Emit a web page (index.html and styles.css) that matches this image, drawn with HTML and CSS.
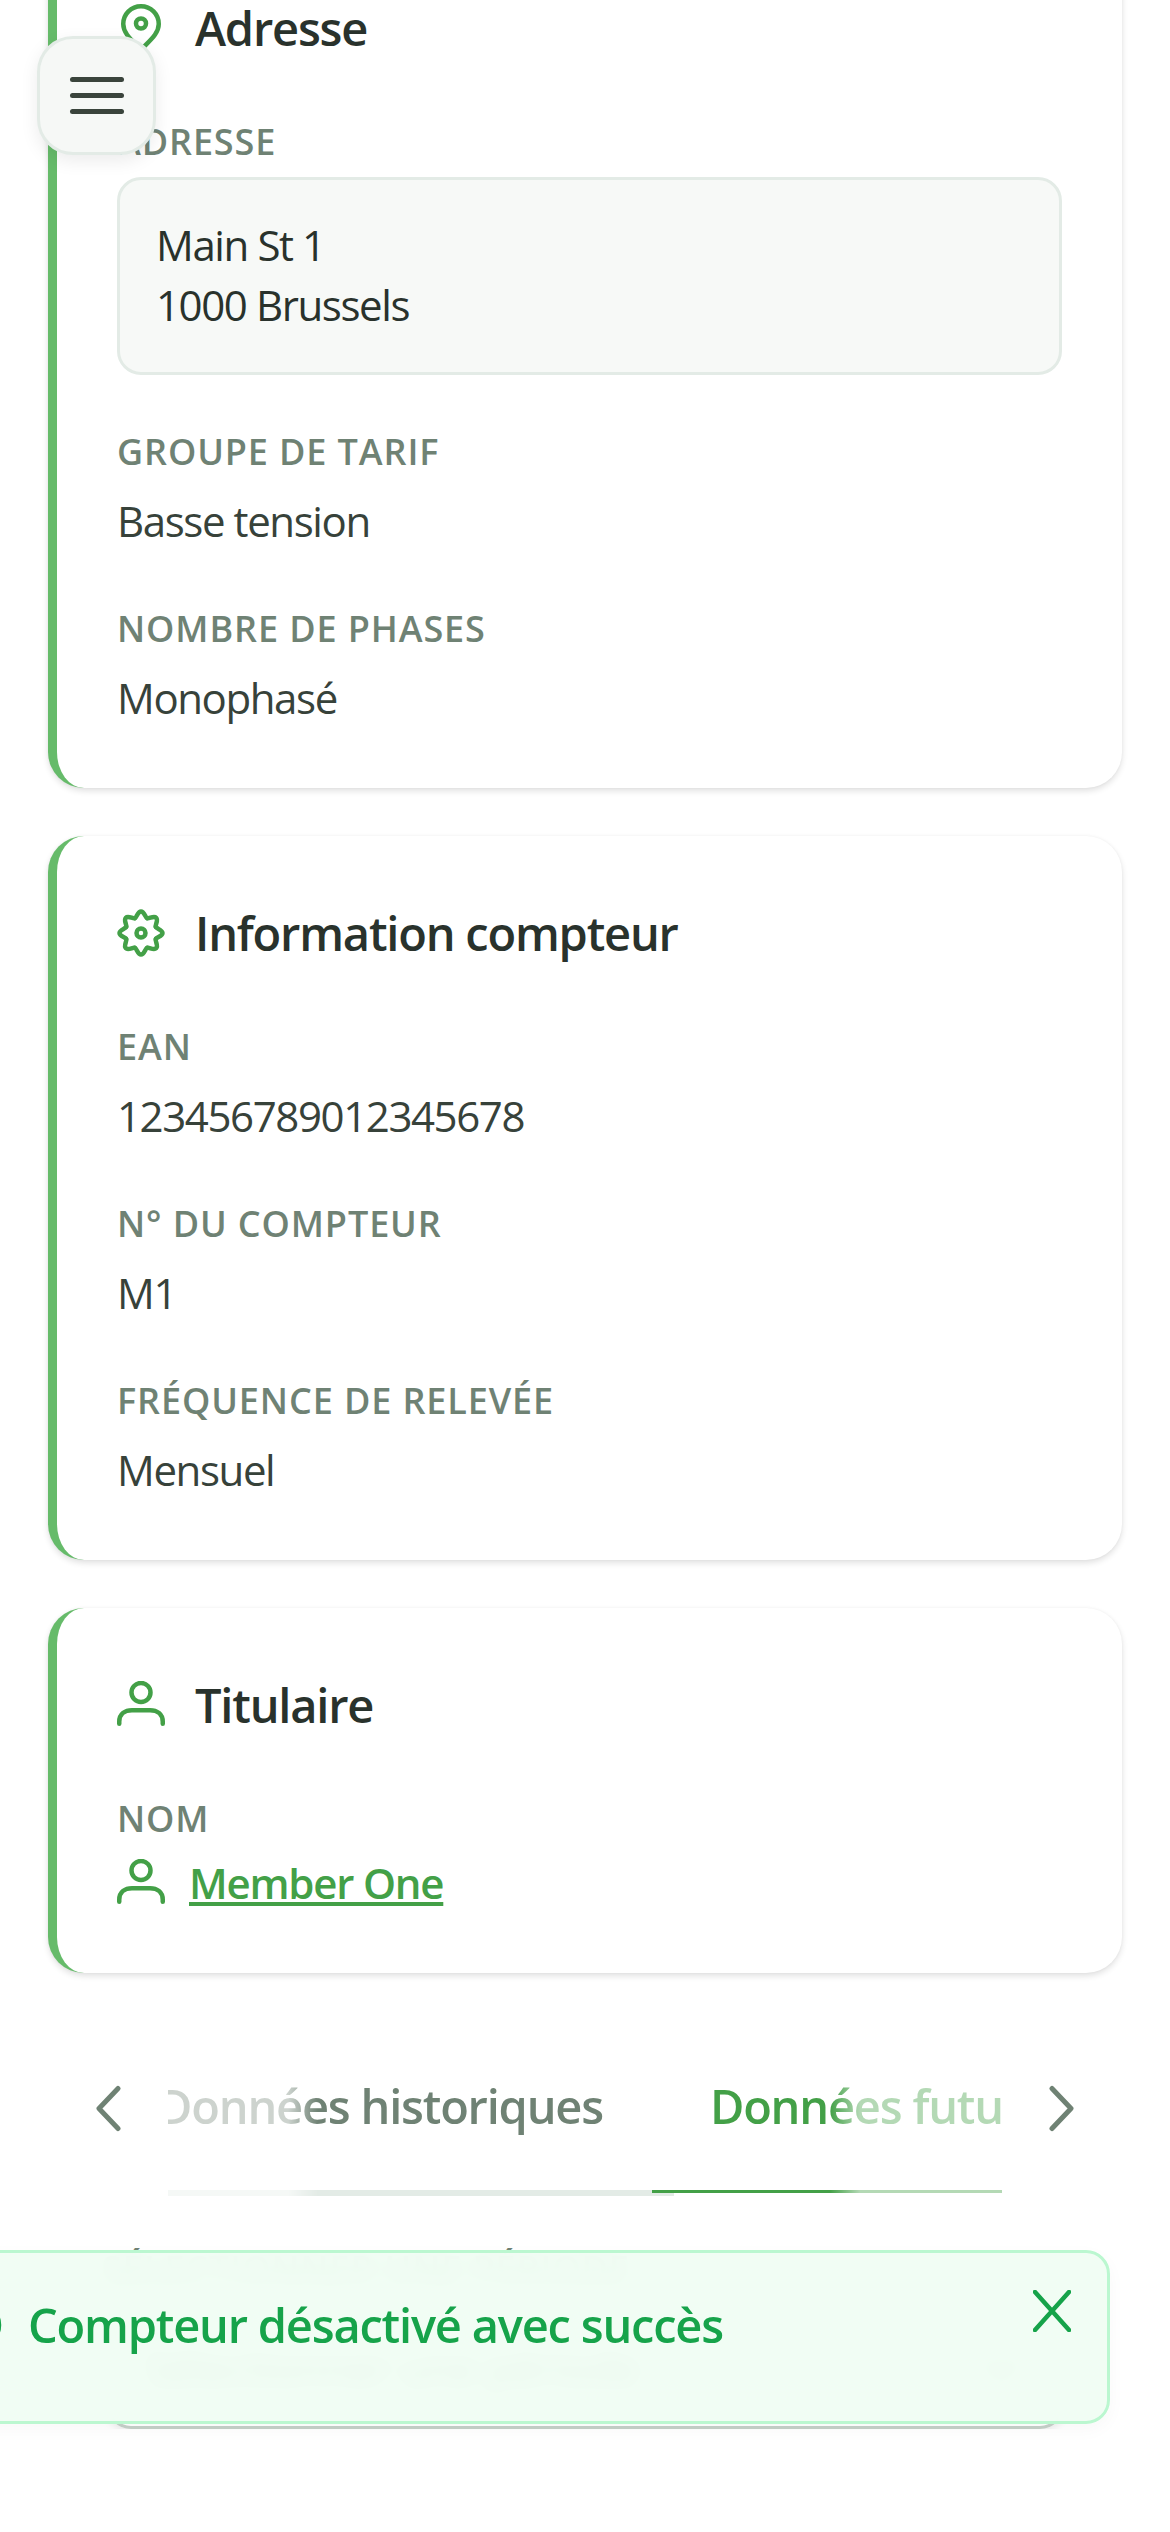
FILE: index.html
```html
<!DOCTYPE html>
<html lang="fr">
<head>
  <meta charset="UTF-8" />
  <meta name="viewport" content="width=device-width, initial-scale=1.0" />
  <title>Compteur</title>
  <link rel="stylesheet" href="styles.css">
</head>
<body>

<svg class="defs" width="0" height="0" aria-hidden="true">
  <defs>
    <path id="tooth" d="M17.88 9.22C19.8 8.45 20.6 2.5 24 2.5s4.2 5.95 6.12 6.72" />
    <g id="user">
      <circle cx="24" cy="11.5" r="9.5" />
      <path d="M2.25 42.75v-2C2.25 33 8 29.25 15 29.25h18c7 0 12.75 3.75 12.75 11.5v2" />
    </g>
  </defs>
</svg>

<button class="menu-btn" aria-label="Menu">
  <span></span><span></span><span></span>
</button>

<main>
  <section class="card">
    <h2 class="card-title">
      <svg class="icon" viewBox="0 0 48 48"><path d="M24 45.75C16 37 6.25 30 6.25 20a17.75 17.75 0 0 1 35.5 0C41.75 30 32 37 24 45.75z" /><circle cx="24" cy="19.5" r="5" /></svg>
      Adresse
    </h2>
    <div class="field">
      <div class="label">Adresse</div>
      <div class="address-box">Main St 1<br>1000 Brussels</div>
    </div>
    <div class="field">
      <div class="label">Groupe de tarif</div>
      <div class="value">Basse tension</div>
    </div>
    <div class="field">
      <div class="label">Nombre de phases</div>
      <div class="value">Monophasé</div>
    </div>
  </section>

  <section class="card">
    <h2 class="card-title">
      <svg class="icon" viewBox="0 0 48 48">
        <use href="#tooth" />
        <use href="#tooth" transform="rotate(45 24 24)" />
        <use href="#tooth" transform="rotate(90 24 24)" />
        <use href="#tooth" transform="rotate(135 24 24)" />
        <use href="#tooth" transform="rotate(180 24 24)" />
        <use href="#tooth" transform="rotate(225 24 24)" />
        <use href="#tooth" transform="rotate(270 24 24)" />
        <use href="#tooth" transform="rotate(315 24 24)" />
        <circle cx="24" cy="24" r="4.5" />
      </svg>
      Information compteur
    </h2>
    <div class="field">
      <div class="label">EAN</div>
      <div class="value">123456789012345678</div>
    </div>
    <div class="field">
      <div class="label">N° du compteur</div>
      <div class="value">M1</div>
    </div>
    <div class="field">
      <div class="label">Fréquence de relevée</div>
      <div class="value">Mensuel</div>
    </div>
  </section>

  <section class="card">
    <h2 class="card-title">
      <svg class="icon" viewBox="0 0 48 48"><use href="#user" /></svg>
      Titulaire
    </h2>
    <div class="field">
      <div class="label">Nom</div>
      <a class="member" href="#">
        <svg class="icon" viewBox="0 0 48 48"><use href="#user" /></svg>
        <span>Member One</span>
      </a>
    </div>
  </section>

  <nav class="tabs">
    <button class="tab-arrow" aria-label="Précédent">
      <svg viewBox="0 0 48 48"><path d="M34 4.5 15 24.5l19 20" /></svg>
    </button>
    <div class="tab-list">
      <div class="tab">Données historiques</div>
      <div class="tab active">Données futures</div>
    </div>
    <button class="tab-arrow" aria-label="Suivant">
      <svg viewBox="0 0 48 48"><path d="M14 4.5l19 20-19 20" /></svg>
    </button>
  </nav>

  <div class="period">
    <div class="period-label">Sélectionner une période</div>
    <div class="select">
      Sélectionner une période
      <svg viewBox="0 0 48 48"><path d="M6 16l18 18 18-18" /></svg>
    </div>
  </div>
</main>

<div class="toast">
  <svg class="toast-check" viewBox="0 0 48 48"><circle cx="24" cy="24" r="21" /><path d="M15 25l6 6 12-14" /></svg>
  <div class="toast-text">Compteur désactivé avec succès</div>
  <button class="toast-close" aria-label="Fermer">
    <svg viewBox="0 0 38 42"><path d="M2 2l34 38M36 2 2 40" /></svg>
  </button>
</div>

</body>
</html>
```

FILE: styles.css
```css
html, body {
  margin: 0;
  padding: 0;
}

body {
  font-family: 'Open Sans', 'Noto Sans', sans-serif;
  font-stretch: 90%;
  background: #fff;
  color: #37423a;
  overflow-x: hidden;
}

.defs {
  display: block;
  height: 0;
}

button {
  font: inherit;
  background: none;
  border: none;
  padding: 0;
}

main {
  margin-top: -69px;
  padding: 0 48px;
  display: flex;
  flex-direction: column;
  gap: 48px;
}

.card {
  background: #fff;
  border-left: 9px solid #66bb6a;
  border-radius: 36px;
  padding: 62px 60px 59px;
  box-shadow: 0 3px 6px rgba(0,0,0,0.12), 0 0 3px rgba(0,0,0,0.04);
  display: flex;
  flex-direction: column;
  gap: 50px;
}

.card-title {
  margin: -1px 0 1px;
  display: flex;
  align-items: center;
  gap: 30px;
  font-size: 47px;
  line-height: 72px;
  font-weight: 600;
  color: #29322c;
  letter-spacing: -1.2px;
}

.icon {
  width: 48px;
  height: 48px;
  flex: none;
  fill: none;
  stroke: #43a047;
  stroke-width: 4.5;
  stroke-linecap: round;
  stroke-linejoin: round;
}

.field {
  display: flex;
  flex-direction: column;
  gap: 10px;
}

.label {
  font-size: 36px;
  line-height: 54px;
  font-weight: 600;
  color: #6f8274;
  text-transform: uppercase;
  letter-spacing: 0.9px;
}

.value {
  font-size: 42px;
  line-height: 63px;
  letter-spacing: -1.4px;
}

.address-box {
  font-size: 42px;
  line-height: 60px;
  letter-spacing: -1.4px;
  color: #29322c;
  background: #f7f9f7;
  border: 3px solid #e3ebe6;
  border-radius: 24px;
  margin-top: -2px;
  padding: 35px 36px 37px;
}

.member {
  display: flex;
  align-items: center;
  gap: 24px;
  margin-top: -5px;
  font-size: 42px;
  line-height: 63px;
  font-weight: 600;
  letter-spacing: -1.2px;
  color: #43a047;
}

.tabs {
  display: flex;
  margin: 13px 0 0;
}

.tab-arrow {
  width: 120px;
  flex: none;
  display: flex;
  align-items: flex-start;
  justify-content: center;
  padding-top: 50px;
  box-sizing: content-box;
  height: 98px;
}

.tab-arrow svg {
  width: 48px;
  height: 48px;
  fill: none;
  stroke: #6f8274;
  stroke-width: 5;
  stroke-linecap: round;
  stroke-linejoin: round;
}

.tab-list {
  flex: 1;
  min-width: 0;
  display: flex;
  align-items: flex-start;
  overflow: hidden;
  white-space: nowrap;
  -webkit-mask-image: linear-gradient(to right, rgba(0,0,0,0.35) 120px, #000 150px, #000 662px, rgba(0,0,0,0.4) 692px);
  mask-image: linear-gradient(to right, rgba(0,0,0,0.35) 120px, #000 150px, #000 662px, rgba(0,0,0,0.4) 692px);
}

.tab {
  flex: none;
  margin-left: -10px;
  padding: 36px 71px 48px 0;
  font-size: 47px;
  line-height: 72px;
  font-weight: 600;
  letter-spacing: -1.2px;
  color: #6f8274;
  border-bottom: 6px solid #e3ebe6;
}

.tab.active {
  margin-left: -22px;
  padding-left: 58px;
  color: #43a047;
  border-bottom: 3px solid #43a047;
}

.period {
  margin: -2px 58px 0 59px;
  display: flex;
  flex-direction: column;
  gap: 15px;
}

.period-label {
  margin-left: -5px;
  font-size: 36px;
  line-height: 54px;
  font-weight: 600;
  letter-spacing: 0.9px;
  text-transform: uppercase;
  color: #6f8274;
}

.select {
  display: flex;
  align-items: center;
  justify-content: space-between;
  height: 118px;
  box-sizing: border-box;
  padding: 0 36px 6px;
  font-size: 42px;
  color: #37423a;
  border: 3px solid #c5d0c8;
  border-radius: 24px;
  box-shadow: 0 3px 9px rgba(0,0,0,0.08);
}

.select svg {
  width: 48px;
  height: 48px;
  fill: none;
  stroke: #6f8274;
  stroke-width: 5;
}

.menu-btn {
  position: fixed;
  top: 36px;
  left: 37px;
  width: 119px;
  height: 119px;
  box-sizing: border-box;
  background: #f6f8f6;
  border: 3px solid #e3ebe6;
  border-radius: 36px;
  box-shadow: 0 6px 18px rgba(0,0,0,0.08);
  display: flex;
  flex-direction: column;
  align-items: center;
  justify-content: center;
  gap: 11px;
  z-index: 10;
}

.menu-btn span {
  width: 54px;
  height: 5px;
  border-radius: 3px;
  background: #3a443c;
}

.toast {
  position: fixed;
  top: 2250px;
  left: -90px;
  width: 1200px;
  height: 174px;
  box-sizing: border-box;
  display: flex;
  align-items: flex-start;
  gap: 26px;
  padding: 42px 0 0 41px;
  background: rgba(240,253,244,0.96);
  -webkit-backdrop-filter: blur(10px);
  backdrop-filter: blur(10px);
  border: 3px solid #bbf7d0;
  border-radius: 24px;
  box-shadow: 0 6px 18px rgba(0,0,0,0.03);
  color: #16a34a;
  z-index: 20;
}

.toast-check {
  width: 48px;
  height: 48px;
  flex: none;
  margin-top: 6px;
  fill: none;
  stroke: #16a34a;
  stroke-width: 4.5;
}

.toast-text {
  font-size: 47px;
  line-height: 60px;
  font-weight: 600;
  letter-spacing: -1.2px;
}

.toast-close {
  position: absolute;
  top: 37px;
  right: 36px;
  width: 38px;
  height: 42px;
  display: block;
}

.toast-close svg {
  display: block;
  width: 38px;
  height: 42px;
  fill: none;
  stroke: #16a34a;
  stroke-width: 4.5;
  stroke-linecap: round;
}
```
